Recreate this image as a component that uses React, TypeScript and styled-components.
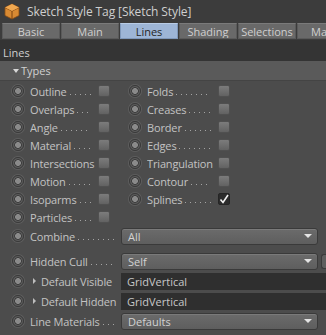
import React from "react";
import styled, { createGlobalStyle } from "styled-components";

const Global = createGlobalStyle`
  html, body { margin: 0; padding: 0; background: #4c4c4c; }
  body { font-family: "Open Sans", "Noto Sans", "DejaVu Sans", sans-serif; }
  #root { width: 326px; height: 335px; overflow: hidden; }
`;

const Page = styled.div`
  width: 326px;
  height: 335px;
  background: #4c4c4c;
  display: flex;
  flex-direction: column;
  overflow: hidden;
`;

const TitleBar = styled.div`
  height: 22px;
  background: #3c3c3c;
  display: flex;
  align-items: center;
  padding-left: 4px;
  gap: 7px;
  color: #cfcfcf;
  font-size: 12px;
  letter-spacing: -0.1px;
  white-space: nowrap;
`;

const TabStrip = styled.div`
  height: 18px;
  background: #3c3c3c;
  display: flex;
  padding: 1px 0 0 2px;
  box-sizing: border-box;
  gap: 1px;
`;

const Tab = styled.div<{ $active?: boolean; $clipped?: boolean }>`
  flex: 0 0 58px;
  height: 16px;
  box-sizing: border-box;
  border: 1px solid ${(p) => (p.$active ? "#7f98ba" : "#5a5a5a")};
  border-top-color: ${(p) => (p.$active ? "#b8cce6" : "#7a7a7a")};
  background: ${(p) => (p.$active ? "#9db5d6" : "#696969")};
  color: ${(p) => (p.$active ? "#262626" : "#cfcfcf")};
  font-size: 11px;
  display: flex;
  align-items: center;
  justify-content: ${(p) => (p.$clipped ? "flex-start" : "center")};
  padding-left: ${(p) => (p.$clipped ? "13px" : "0")};
  white-space: nowrap;
  overflow: hidden;
`;

const SectionHeader = styled.div`
  height: 21px;
  background: #343434;
  color: #cfcfcf;
  font-size: 11px;
  display: flex;
  align-items: center;
  padding-left: 3px;
  padding-top: 3px;
  box-sizing: border-box;
`;

const GroupHeader = styled.div`
  height: 19px;
  background: #5a5a5a;
  border-bottom: 1px solid #444;
  color: #d0d0d0;
  font-size: 11px;
  display: flex;
  align-items: center;
  padding-left: 13px;
  gap: 2px;
`;

const Caret = styled.span<{ $down?: boolean }>`
  display: inline-block;
  width: 0;
  height: 0;
  ${(p) =>
    p.$down
      ? `border-left: 3px solid transparent; border-right: 3px solid transparent; border-top: 4px solid #d8d8d8;`
      : `border-top: 3px solid transparent; border-bottom: 3px solid transparent; border-left: 3px solid #bdbdbd; margin-left: 3px; align-self: center;`}
`;

const Grid = styled.div`
  display: grid;
  grid-template-columns: 117px 117px;
  grid-auto-rows: 18px;
  padding: 1px 0 0 12px;
`;

const Cell = styled.div`
  display: flex;
  align-items: center;
`;

const Radio = styled.span`
  flex: 0 0 12px;
  width: 12px;
  height: 12px;
  border-radius: 50%;
  box-sizing: border-box;
  border: 1px solid #3a3a3a;
  background: radial-gradient(circle, #8a8a8a 0 2.6px, #3e3e3e 3.2px 3.6px, #5c5c5c 4px);
  box-shadow: 0 0 0 1px #5e5e5e;
`;

const Label = styled.span<{ $w: number }>`
  flex: 0 0 ${(p) => p.$w}px;
  margin-left: 6px;
  display: flex;
  align-items: baseline;
  color: #c3c3c3;
  font-size: 11px;
  letter-spacing: -0.15px;
  white-space: nowrap;
  overflow: hidden;
`;

const Leader = styled.span`
  flex: 1;
  height: 1px;
  margin: 0 7px 4px 3px;
  background-image: linear-gradient(to right, #a4a4a4 1px, transparent 1px);
  background-size: 5px 1px;
  align-self: flex-end;
`;

const Check = styled.span<{ $on?: boolean }>`
  flex: 0 0 12px;
  width: 12px;
  height: 12px;
  box-sizing: border-box;
  border-radius: 2px;
  border: 1px solid ${(p) => (p.$on ? "#252525" : "#505050")};
  background: ${(p) =>
    p.$on ? "#2c2c2c" : "linear-gradient(#7c7c7c, #626262)"};
  display: flex;
  align-items: center;
  justify-content: center;
`;

const FieldRows = styled.div`
  display: flex;
  flex-direction: column;
  padding-left: 12px;
`;

const FieldRow = styled.div<{ $h: number; $mt?: number }>`
  height: ${(p) => p.$h}px;
  margin-top: ${(p) => p.$mt ?? 0}px;
  display: flex;
  align-items: center;
`;

const FieldLabel = styled.span`
  flex: 0 0 91px;
  margin-left: 6px;
  display: flex;
  align-items: baseline;
  color: #c3c3c3;
  font-size: 11px;
  letter-spacing: -0.15px;
  white-space: nowrap;
  overflow: hidden;
`;

const Indented = styled.span`
  margin-left: 5px;
`;

const Dropdown = styled.div`
  flex: 0 0 197px;
  height: 17px;
  box-sizing: border-box;
  border: 1px solid #3a3a3a;
  border-radius: 3px;
  background: linear-gradient(#6b6b6b, #5e5e5e);
  box-shadow: inset 0 1px 0 #7a7a7a;
  color: #d2d2d2;
  font-size: 11px;
  display: flex;
  align-items: center;
  justify-content: space-between;
  padding: 0 5px 0 6px;
`;

const Arrow = styled.span`
  width: 0;
  height: 0;
  border-left: 4px solid transparent;
  border-right: 4px solid transparent;
  border-top: 4px solid #e4e4e4;
`;

const TextField = styled.div`
  flex: 1;
  height: 17px;
  background: #2f2f2f;
  color: #c8c8c8;
  font-size: 11px;
  display: flex;
  align-items: center;
  padding-left: 6px;
`;

const EdgeButton = styled.div`
  flex: 0 0 6px;
  height: 15px;
  margin-left: 3px;
  box-sizing: border-box;
  border: 1px solid #3a3a3a;
  border-right: none;
  border-radius: 3px 0 0 3px;
  background: #5e5e5e;
`;

const CubeIcon = () => (
  <svg width="16" height="17" viewBox="0 0 16 17">
    <path d="M8 1 L15 4.5 L15 12.5 L8 16 L1 12.5 L1 4.5 Z" fill="#d88a33" stroke="#8a4e14" strokeWidth="0.8" />
    <path d="M1 4.5 L8 8 L15 4.5" fill="none" stroke="#7a4210" strokeWidth="1" />
    <path d="M8 8 L8 16" stroke="#7a4210" strokeWidth="1" />
    <path d="M8 1 L15 4.5 L8 8 L1 4.5 Z" fill="#f0a850" />
  </svg>
);

const CheckMark = () => (
  <svg width="10" height="10" viewBox="0 0 10 10">
    <path d="M1.5 5.5 L4 8.5 L9 1" fill="none" stroke="#f2f2f2" strokeWidth="1.6" />
  </svg>
);

type Item = { label: string; leader: boolean; checked?: boolean };

const left: Item[] = [
  { label: "Outline", leader: true },
  { label: "Overlaps", leader: true },
  { label: "Angle", leader: true },
  { label: "Material", leader: true },
  { label: "Intersections", leader: false },
  { label: "Motion", leader: true },
  { label: "Isoparms", leader: true },
  { label: "Particles", leader: true },
];

const right: Item[] = [
  { label: "Folds", leader: true },
  { label: "Creases", leader: true },
  { label: "Border", leader: true },
  { label: "Edges", leader: true },
  { label: "Triangulation", leader: false },
  { label: "Contour", leader: true },
  { label: "Splines", leader: true, checked: true },
];

const BoolCell = ({ item, w }: { item?: Item; w: number }) =>
  item ? (
    <Cell>
      <Radio />
      <Label $w={w}>
        {item.label}
        {item.leader ? <Leader /> : null}
      </Label>
      <Check $on={item.checked}>{item.checked ? <CheckMark /> : null}</Check>
    </Cell>
  ) : (
    <Cell />
  );

export default function App() {
  const tabs = ["Basic", "Main", "Lines", "Shading", "Selections", "Ma"];
  return (
    <Page>
      <Global />
      <TitleBar>
        <CubeIcon />
        <span>Sketch Style Tag [Sketch Style]</span>
      </TitleBar>
      <TabStrip>
        {tabs.map((t) => (
          <Tab key={t} $active={t === "Lines"} $clipped={t === "Ma"}>
            {t}
          </Tab>
        ))}
      </TabStrip>
      <SectionHeader>Lines</SectionHeader>
      <GroupHeader>
        <Caret $down />
        Types
      </GroupHeader>
      <Grid>
        {left.map((l, i) => (
          <React.Fragment key={l.label}>
            <BoolCell item={l} w={68} />
            <BoolCell item={right[i]} w={71} />
          </React.Fragment>
        ))}
      </Grid>
      <FieldRows>
        <FieldRow $h={18} $mt={1}>
          <Radio />
          <FieldLabel>
            Combine
            <Leader />
          </FieldLabel>
          <Dropdown>
            All
            <Arrow />
          </Dropdown>
        </FieldRow>
        <FieldRow $h={20} $mt={6}>
          <Radio />
          <FieldLabel>
            Hidden Cull
            <Leader />
          </FieldLabel>
          <Dropdown>
            Self
            <Arrow />
          </Dropdown>
          <EdgeButton />
        </FieldRow>
        <FieldRow $h={20}>
          <Radio />
          <FieldLabel>
            <Caret />
            <Indented>Default Visible</Indented>
          </FieldLabel>
          <TextField>GridVertical</TextField>
        </FieldRow>
        <FieldRow $h={20}>
          <Radio />
          <FieldLabel>
            <Caret />
            <Indented>Default Hidden</Indented>
          </FieldLabel>
          <TextField>GridVertical</TextField>
        </FieldRow>
        <FieldRow $h={20}>
          <Radio />
          <FieldLabel>
            Line Materials
            <Leader />
          </FieldLabel>
          <Dropdown>
            Defaults
            <Arrow />
          </Dropdown>
        </FieldRow>
      </FieldRows>
    </Page>
  );
}
